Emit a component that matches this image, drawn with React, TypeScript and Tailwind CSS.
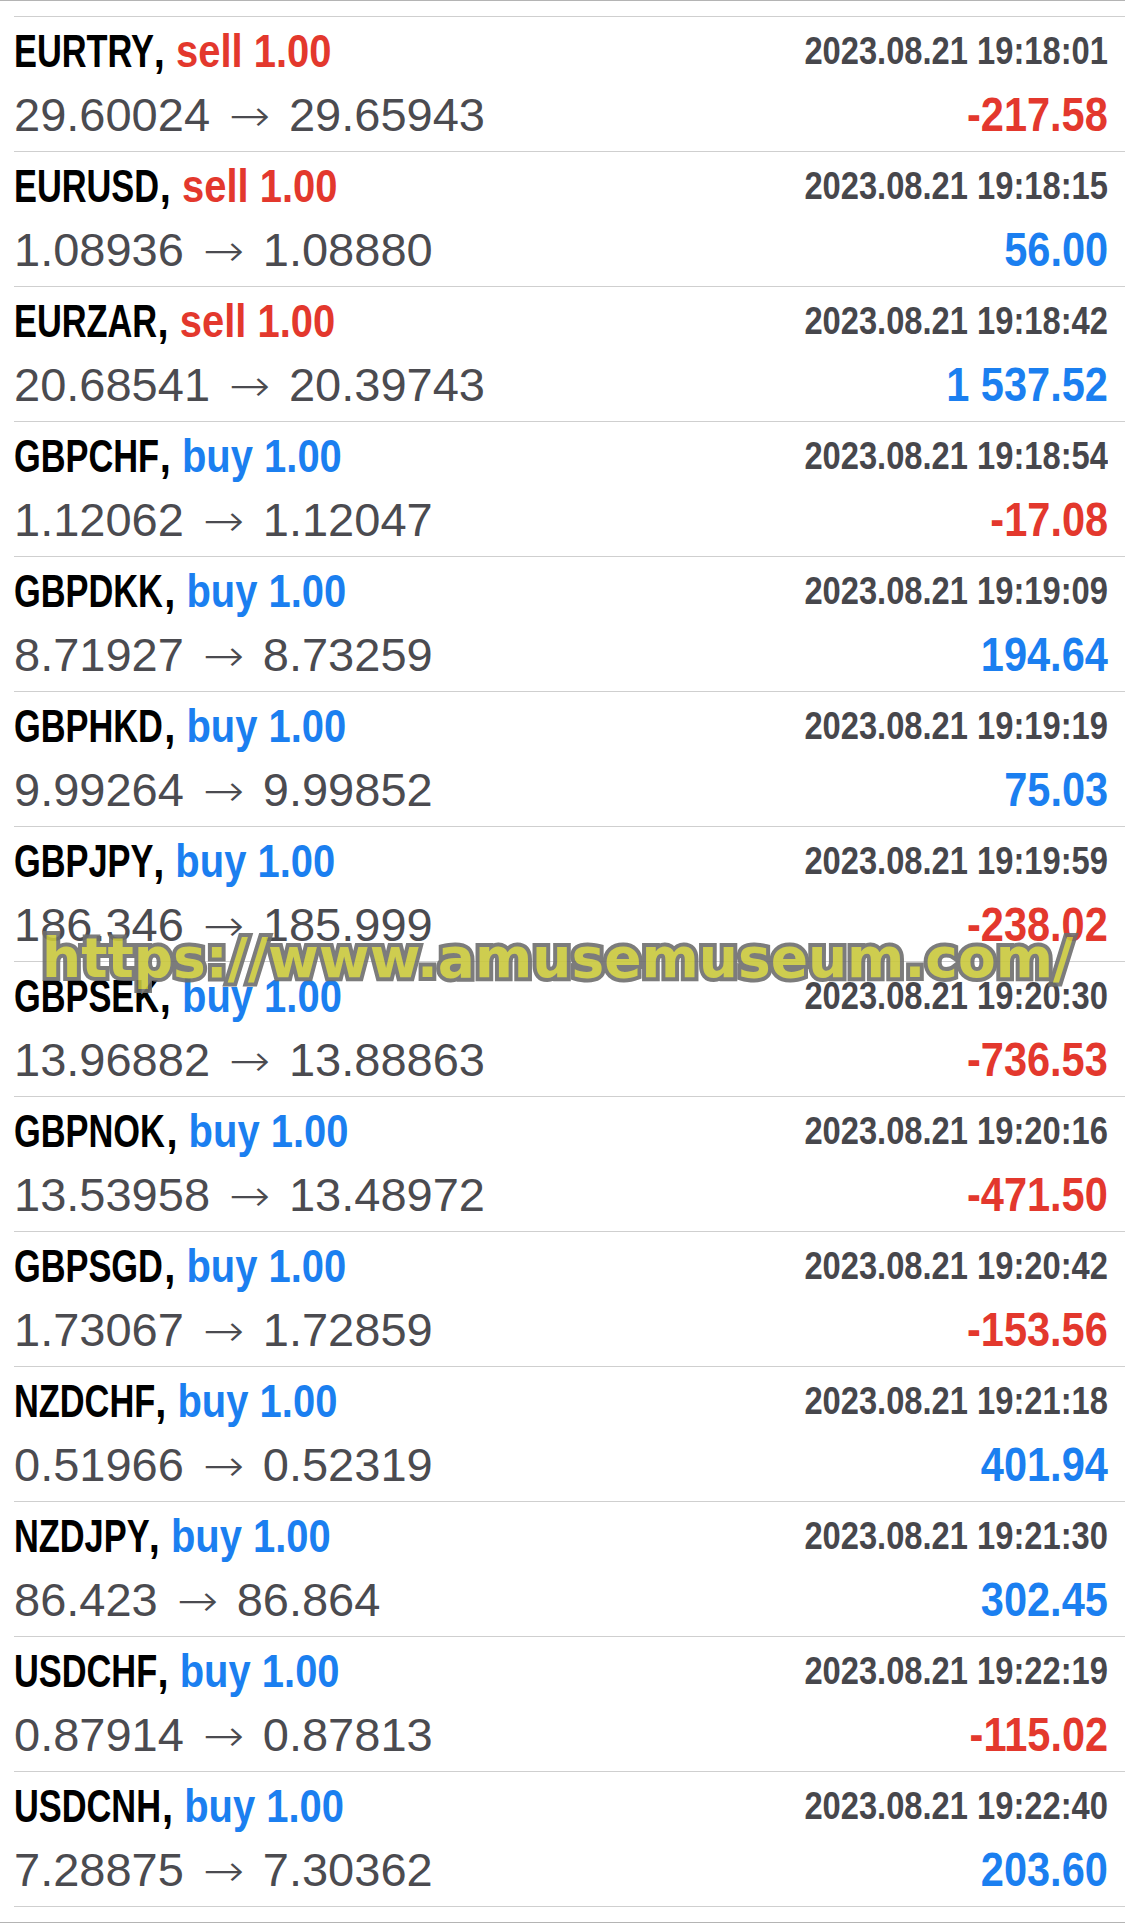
import React from 'react';

type Trade = {
  symbol: string;
  side: 'buy' | 'sell';
  time: string;
  open: string;
  close: string;
  profit: string;
};

const trades: Trade[] = [
  { symbol: 'EURTRY', side: 'sell', time: '19:18:01', open: '29.60024', close: '29.65943', profit: '-217.58' },
  { symbol: 'EURUSD', side: 'sell', time: '19:18:15', open: '1.08936', close: '1.08880', profit: '56.00' },
  { symbol: 'EURZAR', side: 'sell', time: '19:18:42', open: '20.68541', close: '20.39743', profit: '1 537.52' },
  { symbol: 'GBPCHF', side: 'buy', time: '19:18:54', open: '1.12062', close: '1.12047', profit: '-17.08' },
  { symbol: 'GBPDKK', side: 'buy', time: '19:19:09', open: '8.71927', close: '8.73259', profit: '194.64' },
  { symbol: 'GBPHKD', side: 'buy', time: '19:19:19', open: '9.99264', close: '9.99852', profit: '75.03' },
  { symbol: 'GBPJPY', side: 'buy', time: '19:19:59', open: '186.346', close: '185.999', profit: '-238.02' },
  { symbol: 'GBPSEK', side: 'buy', time: '19:20:30', open: '13.96882', close: '13.88863', profit: '-736.53' },
  { symbol: 'GBPNOK', side: 'buy', time: '19:20:16', open: '13.53958', close: '13.48972', profit: '-471.50' },
  { symbol: 'GBPSGD', side: 'buy', time: '19:20:42', open: '1.73067', close: '1.72859', profit: '-153.56' },
  { symbol: 'NZDCHF', side: 'buy', time: '19:21:18', open: '0.51966', close: '0.52319', profit: '401.94' },
  { symbol: 'NZDJPY', side: 'buy', time: '19:21:30', open: '86.423', close: '86.864', profit: '302.45' },
  { symbol: 'USDCHF', side: 'buy', time: '19:22:19', open: '0.87914', close: '0.87813', profit: '-115.02' },
  { symbol: 'USDCNH', side: 'buy', time: '19:22:40', open: '7.28875', close: '7.30362', profit: '203.60' },
];

const TradeRow: React.FC<{ trade: Trade }> = ({ trade }) => {
  const sideColor = trade.side === 'sell' ? 'text-[#e3382d]' : 'text-[#1b7ff0]';
  const profitColor = trade.profit.startsWith('-') ? 'text-[#e3382d]' : 'text-[#1b7ff0]';

  return (
    <div className="ml-[14px] h-[135px] border-t border-[#cfcfcf] pr-[17px] pt-[2px]">
      {/* symbol, side, open time */}
      <div className="flex h-[64px] items-start justify-between">
        <span className="inline-block origin-left scale-x-[0.85] whitespace-nowrap text-[47px] leading-[64px] font-bold">
          <span className="mr-[-27px] inline-block origin-left scale-x-[0.86] text-black">{trade.symbol}</span>
          <span className="text-black">,</span>{' '}
          <span className={sideColor}>{trade.side} 1.00</span>
        </span>
        <span className="inline-block origin-right scale-x-[0.86] whitespace-nowrap text-[38px] leading-[64px] font-bold text-[#47474c]">
          2023.08.21 {trade.time}
        </span>
      </div>

      {/* prices, profit */}
      <div className="flex h-[64px] items-start justify-between">
        <span className="whitespace-nowrap text-[47px] leading-[64px] text-[#4b4b50]">
          {trade.open}
          <span className="mx-[21px] inline-block scale-x-[1.12] font-['DejaVu_Sans',sans-serif] text-[44px] font-extralight">→</span>
          {trade.close}
        </span>
        <span className={`inline-block origin-right scale-x-[0.865] whitespace-nowrap text-[48px] leading-[64px] font-bold ${profitColor}`}>
          {trade.profit}
        </span>
      </div>
    </div>
  );
};

export default function App() {
  return (
    <div className="min-h-screen bg-white font-['Liberation_Sans',Arial,sans-serif]">
      <div className="relative border-y border-[#b4b4b4] py-[15px]">
        {trades.map((t) => (
          <TradeRow key={t.symbol} trade={t} />
        ))}
        <div className="ml-[14px] border-t border-[#cfcfcf]" />

        {/* watermark */}
        <div className="pointer-events-none absolute left-[42px] top-[930px] whitespace-nowrap font-['DejaVu_Sans',sans-serif] text-[55px] font-bold leading-[55px] text-[#c9c83c] opacity-90 [-webkit-text-stroke:8px_#6e6e6e] [paint-order:stroke_fill]">
          https://www.amusemuseum.com/
        </div>
      </div>
    </div>
  );
}
